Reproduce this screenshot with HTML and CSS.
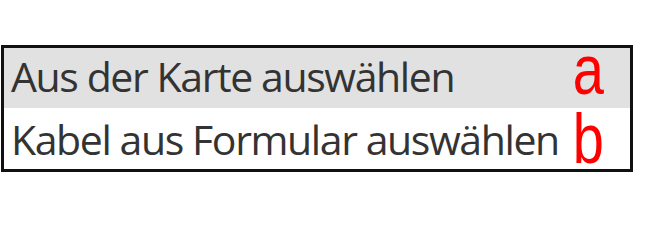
FILE: index.html
```html
<!DOCTYPE html>
<html>
<head>
<meta charset="utf-8">
<link rel="stylesheet" href="styles.css">
</head>
<body>
<div class="box">
  <div class="row row-sel">
    <span class="label label-up">Aus der Karte auswählen</span>
    <span class="mark mark-up">a</span>
  </div>
  <div class="row row-b">
    <span class="label">Kabel aus Formular auswählen</span>
    <span class="mark">b</span>
  </div>
</div>
</body>
</html>
```

FILE: styles.css
```css
html, body {
  margin: 0;
  padding: 0;
  background: #ffffff;
}
.box {
  box-sizing: border-box;
  width: 632px;
  margin: 45px 0 0 1px;
  border: 3px solid #111111;
}
.row {
  height: 60px;
  display: grid;
  grid-template-columns: 1fr auto;
  align-items: center;
  padding: 0 26px 0 7px;
}
.row-b {
  height: 61px;
}
.row-sel {
  background: #e1e1e1;
}
.label {
  font-family: "Open Sans", sans-serif;
  font-size: 41px;
  letter-spacing: -1.4px;
  line-height: 60px;
  color: #333333;
  white-space: nowrap;
}
.label-up {
  transform: translateY(-2px);
}
.mark {
  font-family: "Liberation Sans", Arial, sans-serif;
  font-size: 70px;
  line-height: 60px;
  color: #ff0000;
  display: inline-block;
  transform: scaleX(0.8);
  transform-origin: right center;
}
.mark-up {
  transform: translateY(-8px) scaleX(0.8);
}
```
